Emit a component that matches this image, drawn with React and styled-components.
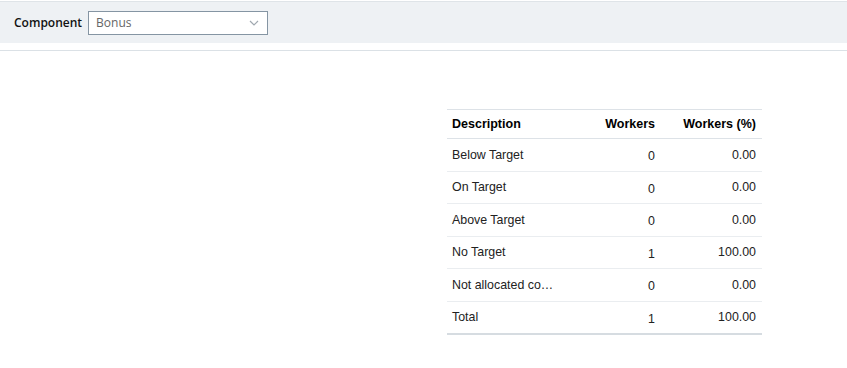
import React from "react";
import styled, { createGlobalStyle } from "styled-components";

const Global = createGlobalStyle`
  html, body { margin: 0; padding: 0; background: #fff; }
  body { font-family: "Liberation Sans", Arial, sans-serif; }
`;

const Page = styled.div`
  padding-top: 1px;
`;

const Toolbar = styled.div`
  display: flex;
  align-items: center;
  gap: 6px;
  height: 41px;
  padding-left: 14px;
  background: #eef1f4;
  border-top: 1px solid #dfe4e8;
`;

const Label = styled.span`
  font-family: "Open Sans", "Noto Sans", sans-serif;
  font-weight: 600;
  font-size: 12px;
  color: #111;
`;

const Select = styled.div`
  box-sizing: border-box;
  width: 180px;
  height: 24px;
  border: 1px solid #8595a3;
  background: #fff;
  display: flex;
  align-items: center;
  justify-content: space-between;
  padding: 0 8px 0 7px;
  font-family: "Open Sans", "Noto Sans", sans-serif;
  font-size: 12px;
  color: #666;
`;

const Divider = styled.div`
  margin-top: 7px;
  height: 1px;
  background: #dbe1e6;
`;

const Content = styled.div`
  display: flex;
  padding: 58px 0 0 447px;
`;

const Table = styled.table`
  width: 315px;
  border-collapse: collapse;
  table-layout: fixed;
  border-top: 1px solid #dde2e7;
  border-bottom: 2px solid #d6dce1;
`;

const Th = styled.th`
  height: 28px;
  padding: 0 ${(p) => (p.$right ? "6px" : "5px")};
  text-align: ${(p) => (p.$right ? "right" : "left")};
  font-size: 12.5px;
  font-weight: bold;
  color: #000;
  border-bottom: 1px solid #dde2e7;
`;

const Td = styled.td`
  height: 32.5px;
  padding: ${(p) => (p.$num ? "3px" : "0")} ${(p) => (p.$right ? "6px" : "5px")} 0;
  box-sizing: border-box;
  text-align: ${(p) => (p.$right ? "right" : "left")};
  font-size: 12.4px;
  color: #222;
  border-bottom: 1px solid #eaedf0;
  white-space: nowrap;
  overflow: hidden;
  text-overflow: ellipsis;
`;

const Row = styled.tr`
  &:last-child td { border-bottom: none; }
`;

const rows = [
  ["Below Target", "0", "0.00"],
  ["On Target", "0", "0.00"],
  ["Above Target", "0", "0.00"],
  ["No Target", "1", "100.00"],
  ["Not allocated component", "0", "0.00"],
  ["Total", "1", "100.00"],
];

export default function App() {
  return (
    <Page>
      <Global />
      <Toolbar>
        <Label>Component</Label>
        <Select>
          <span>Bonus</span>
          <svg width="10" height="6" viewBox="0 0 10 6">
            <path d="M1 1 L5 5 L9 1" fill="none" stroke="#a0a8b0" strokeWidth="1.2" />
          </svg>
        </Select>
      </Toolbar>
      <Divider />
      <Content>
        <Table>
          <colgroup>
            <col style={{ width: 115 }} />
            <col style={{ width: 99 }} />
            <col style={{ width: 101 }} />
          </colgroup>
          <thead>
            <tr>
              <Th>Description</Th>
              <Th $right>Workers</Th>
              <Th $right>Workers (%)</Th>
            </tr>
          </thead>
          <tbody>
            {rows.map((r) => (
              <Row key={r[0]}>
                <Td title={r[0]}>{r[0]}</Td>
                <Td $right $num>{r[1]}</Td>
                <Td $right>{r[2]}</Td>
              </Row>
            ))}
          </tbody>
        </Table>
      </Content>
    </Page>
  );
}
